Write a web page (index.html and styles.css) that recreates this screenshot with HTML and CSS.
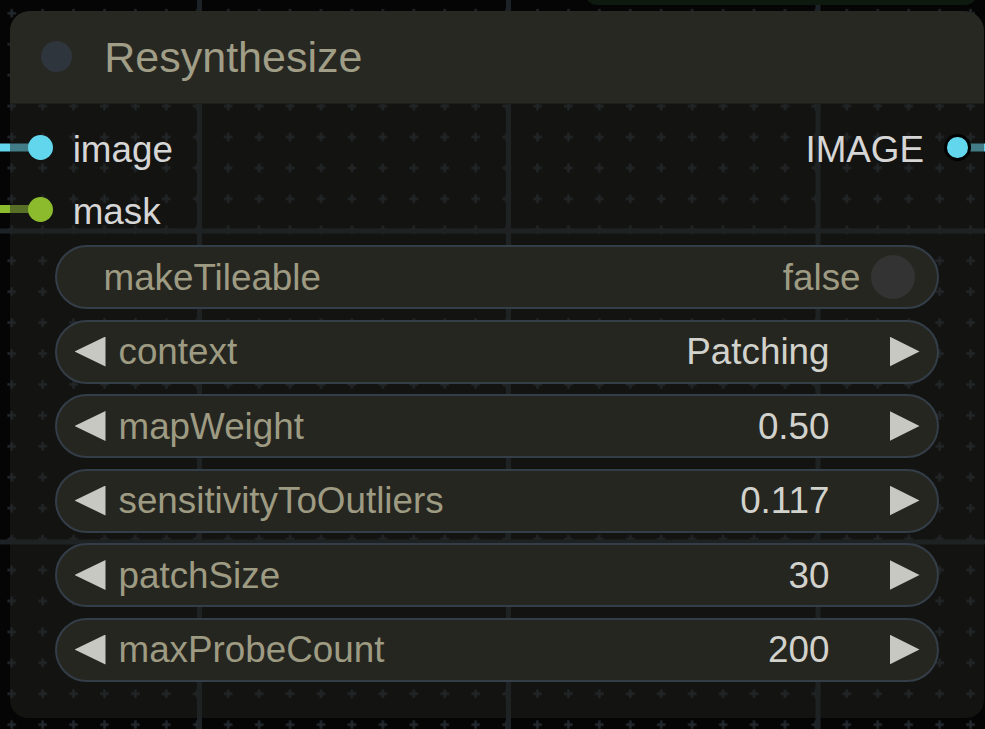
FILE: index.html
```html
<!DOCTYPE html>
<html lang="en">
<head>
  <meta charset="UTF-8" />
  <meta name="viewport" content="width=device-width, initial-scale=1.0"/>
  <title>Resynthesize node</title>
  <link rel="stylesheet" href="styles.css">
</head>
<body>

  <div class="canvas">
    <!-- canvas grid -->
    <svg class="grid" width="985" height="729" viewBox="0 0 985 729">
      <defs>
        <pattern id="plus" width="30.93" height="30.93" patternUnits="userSpaceOnUse" x="-3.76" y="-2.16">
          <rect x="11.21" y="14.21" width="8.5" height="2.5" fill="#22282d"/>
          <rect x="14.21" y="11.21" width="2.5" height="8.5" fill="#22282d"/>
        </pattern>
      </defs>
      <rect width="985" height="729" fill="url(#plus)"/>
      <rect x="197" y="0" width="5" height="729" fill="#1d2226"/>
      <rect x="506" y="0" width="5" height="729" fill="#1d2226"/>
      <rect x="815.5" y="0" width="5" height="729" fill="#1d2226"/>
      <rect x="0" y="228.5" width="985" height="5" fill="#1d2226"/>
      <rect x="0" y="539.5" width="985" height="5" fill="#1d2226"/>
    </svg>

    <div class="peer-node"></div>

    <!-- links run under the node body -->
    <svg class="links" width="985" height="729" viewBox="0 0 985 729">
      <line x1="-4" y1="147.5" x2="40" y2="147.5" stroke="#62d6ec" stroke-width="8"/>
      <line x1="-4" y1="209" x2="40" y2="209" stroke="#8cbc2e" stroke-width="8"/>
      <line x1="957" y1="147.5" x2="992" y2="147.5" stroke="#62d6ec" stroke-width="8"/>
    </svg>

    <div class="node">
      <div class="node-title">
        <span class="title-dot"></span>
        <span class="title-text">Resynthesize</span>
      </div>

      <div class="slots">
        <div class="slot-col">
          <div class="slot"><span class="slot-dot cyan"></span><span class="slot-name">image</span></div>
          <div class="slot"><span class="slot-dot green"></span><span class="slot-name">mask</span></div>
        </div>
        <div class="slot-col outputs">
          <div class="slot"><span class="slot-name">IMAGE</span><span class="slot-dot cyan ring"></span></div>
        </div>
      </div>

      <div class="widgets">
        <div class="widget toggle">
          <span class="w-label">makeTileable</span>
          <span class="w-value dim">false</span>
          <span class="knob"></span>
        </div>
        <div class="widget">
          <span class="arrow left"></span>
          <span class="w-label">context</span>
          <span class="w-value">Patching</span>
          <span class="arrow right"></span>
        </div>
        <div class="widget">
          <span class="arrow left"></span>
          <span class="w-label">mapWeight</span>
          <span class="w-value">0.50</span>
          <span class="arrow right"></span>
        </div>
        <div class="widget">
          <span class="arrow left"></span>
          <span class="w-label">sensitivityToOutliers</span>
          <span class="w-value">0.117</span>
          <span class="arrow right"></span>
        </div>
        <div class="widget">
          <span class="arrow left"></span>
          <span class="w-label">patchSize</span>
          <span class="w-value">30</span>
          <span class="arrow right"></span>
        </div>
        <div class="widget">
          <span class="arrow left"></span>
          <span class="w-label">maxProbeCount</span>
          <span class="w-value">200</span>
          <span class="arrow right"></span>
        </div>
      </div>
    </div>
  </div>

</body>
</html>
```

FILE: styles.css
```css
body {
  margin: 0;
  background: #050505;
  font-family: 'Liberation Sans', Arial, sans-serif;
  overflow: hidden;
}

.canvas {
  position: relative;
  width: 985px;
  height: 729px;
  overflow: hidden;
}

.grid,
.links {
  position: absolute;
  left: 0;
  top: 0;
}

.peer-node {
  position: absolute;
  left: 585px;
  top: -20px;
  width: 392px;
  height: 25px;
  background: #0e1a0f;
  border-radius: 0 0 12px 12px;
}

.node {
  position: absolute;
  left: 10px;
  top: 11px;
  width: 974px;
  height: 707px;
  background: rgba(34, 34, 32, 0.5);
  border-radius: 20px 20px 18px 18px;
  display: flex;
  flex-direction: column;
}

.node-title {
  height: 92.5px;
  background: #282823;
  border-radius: 20px 20px 0 0;
  border-bottom: 1px solid #1e1e1b;
  box-sizing: border-box;
  display: flex;
  align-items: center;
  padding-left: 30.7px;
}

.title-dot {
  width: 31px;
  height: 31px;
  border-radius: 50%;
  background: #2f353c;
}

.title-text {
  margin-left: 32.6px;
  padding-top: 2px;
  font-size: 43px;
  color: #a09e86;
}

.slots {
  display: flex;
  justify-content: space-between;
  padding-top: 13px;
}

.slot-col {
  display: flex;
  flex-direction: column;
}

.slot {
  height: 62px;
  display: flex;
  align-items: center;
  gap: 19.4px;
  font-size: 36.8px;
  color: #d6d6d6;
  padding-left: 18.3px;
}

.slot-name {
  padding-top: 4px;
}

.outputs .slot {
  padding-left: 0;
  padding-right: 13.4px;
  gap: 20px;
}

.slot-dot {
  width: 25px;
  height: 25px;
  border-radius: 50%;
  box-sizing: border-box;
}

.slot-dot.cyan {
  background: #62d6ec;
}

.slot-dot.green {
  background: #8cbc2e;
}

.slot-dot.ring {
  width: 26.6px;
  height: 26.6px;
  border: 3px solid #000;
}

.widgets {
  display: flex;
  flex-direction: column;
  gap: 10.5px;
  margin: 4.5px 45px 0;
}

.widget {
  height: 64px;
  box-sizing: border-box;
  border: 2.5px solid #343e48;
  border-radius: 32px;
  background: #262621;
  display: flex;
  align-items: center;
  font-size: 36.8px;
  padding: 0 17.5px;
}

.w-label {
  color: #9e9b83;
  margin-left: 13px;
  padding-top: 1px;
}

.w-value {
  margin-left: auto;
  margin-right: 60px;
  padding-top: 1px;
  color: #d2d2cd;
}

.w-value.dim {
  color: #9e9b83;
  margin-right: 10px;
}

.arrow {
  width: 31px;
  height: 30px;
  background: #c8c8c2;
}

.arrow.left {
  clip-path: polygon(0 50%, 100% 0, 100% 100%);
}

.arrow.right {
  width: 30px;
  clip-path: polygon(0 0, 100% 50%, 0 100%);
}

.toggle {
  padding: 0 22.5px 0 33.5px;
}

.knob {
  width: 44px;
  height: 44px;
  border-radius: 50%;
  background: #333333;
}
```
